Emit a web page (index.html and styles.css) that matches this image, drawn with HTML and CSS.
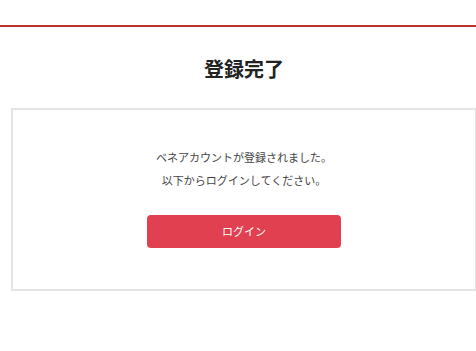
FILE: index.html
```html
<!DOCTYPE html>
<html lang="ja">
<head>
  <meta charset="UTF-8">
  <meta name="viewport" content="width=device-width, initial-scale=1.0">
  <title>登録完了</title>
  <link rel="stylesheet" href="styles.css">
</head>
<body>
  <header class="site-header"></header>

  <main class="page">
    <h1 class="page-title">登録完了</h1>

    <div class="complete-box">
      <p class="complete-message">ベネアカウントが登録されました。<br>以下からログインしてください。</p>
      <a href="#" class="btn-login">ログイン</a>
    </div>
  </main>
</body>
</html>
```

FILE: styles.css
```css
* {
  box-sizing: border-box;
}

body {
  margin: 0;
  font-family: 'Noto Sans CJK JP', 'Noto Sans', sans-serif;
  color: #333;
  background-color: #fff;
  overflow: hidden;
}

.site-header {
  height: 27px;
  border-bottom: 2px solid #b8322a;
}

.page {
  width: 466px;
  margin-left: 11px;
}

.page-title {
  margin: 0;
  padding-top: 28px;
  height: 81px;
  font-size: 20px;
  line-height: 28px;
  font-weight: bold;
  text-align: center;
  color: #222;
}

.complete-box {
  height: 183px;
  border: 2px solid #e4e4e4;
  padding-top: 36px;
  display: flex;
  flex-direction: column;
  align-items: center;
}

.complete-message {
  margin: 0;
  font-size: 11px;
  line-height: 23px;
  text-align: center;
  color: #444;
}

.btn-login {
  display: block;
  margin-top: 23px;
  width: 194px;
  height: 33px;
  line-height: 33px;
  border-radius: 4px;
  background-color: #e04050;
  color: #fff;
  font-size: 11px;
  text-align: center;
  text-decoration: none;
}
```
